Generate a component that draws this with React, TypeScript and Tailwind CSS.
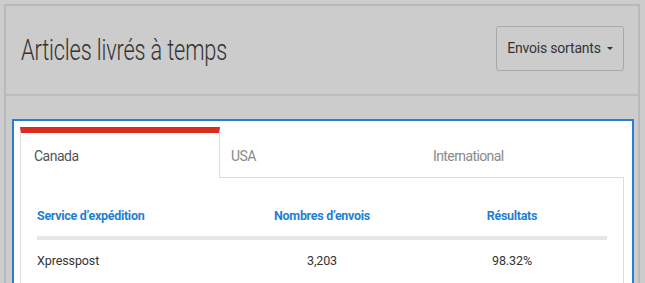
import { useState } from 'react';

const tabs = ['Canada', 'USA', 'International'];

const rows = [
  { service: 'Xpresspost', envois: '3,203', resultat: '98.32%' },
];

export default function App() {
  const [active, setActive] = useState(0);

  return (
    <div className="w-[645px] h-[283px] overflow-hidden bg-[#cccccc] pt-[4px] pl-[4px] font-['Roboto',sans-serif]">
      <div className="w-[636px] h-[300px] border-2 border-[#b9b9b9]">
        {/* En-tête */}
        <div className="h-[90px] flex items-center justify-between pl-[15px] pr-[14px] border-b-2 border-[#bdbdbd]">
          <h1 className="text-[29px] font-light text-[#333333] tracking-[-0.2px] mt-[2px] scale-x-[0.75] origin-left whitespace-nowrap">Articles livrés à temps</h1>
          <button className="h-[45px] w-[128px] flex items-center justify-center gap-[6px] rounded-[3px] border border-[#a9a9a9] text-[14px] tracking-[-0.2px] text-[#333333] mt-[-4px]">
            Envois sortants
            <span className="w-0 h-0 border-l-[3px] border-r-[3px] border-t-[3px] border-l-transparent border-r-transparent border-t-[#333333]" />
          </button>
        </div>

        {/* Contenu */}
        <div className="pt-[23px] pl-[6px]">
          <div className="w-[622px] h-[200px] bg-white border-2 border-[#2a7bd6] pt-[6px] pl-[6px]">
            <div className="flex w-[604px]">
              {tabs.map((t, i) =>
                i === active ? (
                  <button key={t} onClick={() => setActive(i)}
                          className="w-[200px] h-[51px] border-t-[6px] border-t-[#d92b1f] border-l border-r border-[#dddddd] text-left pl-[13px] pt-[2px] text-[14px] tracking-[-0.5px] text-[#555555]">
                    {t}
                  </button>
                ) : (
                  <button key={t} onClick={() => setActive(i)}
                          className="flex-1 h-[51px] border-b border-[#dddddd] text-left pl-[11px] pt-[8px] text-[14px] tracking-[-0.6px] text-[#8a8a8a]">
                    {t}
                  </button>
                )
              )}
            </div>
            <div className="w-[604px] h-[120px] border-l border-r border-[#dddddd] pl-[16px] pr-[16px]">
              <table className="w-full table-fixed border-collapse">
                <thead>
                  <tr className="h-[60px] border-b-4 border-[#e6e6e6] text-[12.5px] tracking-[-0.3px] font-bold text-[#1f7fd1]">
                    <th className="text-left pt-[18px]">Service d’expédition</th>
                    <th className="text-center pt-[18px]">Nombres d’envois</th>
                    <th className="text-center pt-[18px]">Résultats</th>
                  </tr>
                </thead>
                <tbody>
                  {rows.map(r => (
                    <tr key={r.service} className="h-[44px] text-[12.5px] tracking-[-0.1px] text-[#333333]">
                      <td>{r.service}</td>
                      <td className="text-center">{r.envois}</td>
                      <td className="text-center">{r.resultat}</td>
                    </tr>
                  ))}
                </tbody>
              </table>
            </div>
          </div>
        </div>
      </div>
    </div>
  );
}
